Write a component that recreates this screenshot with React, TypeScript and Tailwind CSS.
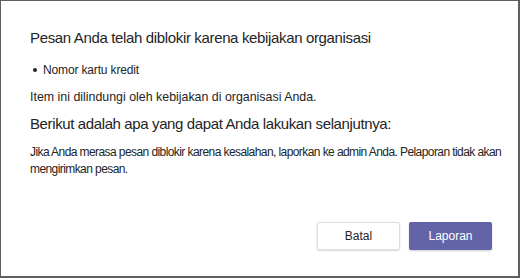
export default function App() {
  return (
    <div className="flex h-[278px] w-[520px] flex-col border border-r-2 border-b-2 border-[#5f5f5f] bg-white pl-[29px] pr-[12px] pt-[27px] font-['Liberation_Sans',Arial,sans-serif] text-[#242424]">
      <h1 className="text-[15px] leading-[20px] tracking-[-0.35px]">
        Pesan Anda telah diblokir karena kebijakan organisasi
      </h1>
      <ul className="mt-[14px] flex flex-col">
        <li className="flex items-center gap-[6px] pl-[3px] text-[12px] leading-[16px] tracking-[-0.15px]">
          <span className="h-[4px] w-[4px] rounded-full bg-[#242424]" />
          <span>Nomor kartu kredit</span>
        </li>
      </ul>
      <p className="mt-[11px] text-[12.4px] leading-[16px]">
        Item ini dilindungi oleh kebijakan di organisasi Anda.
      </p>
      <h2 className="mt-[9px] text-[15px] leading-[20px] tracking-[-0.38px]">
        Berikut adalah apa yang dapat Anda lakukan selanjutnya:
      </h2>
      <p className="mt-[10px] text-[12px] leading-[17px] tracking-[-0.58px]">
        Jika Anda merasa pesan diblokir karena kesalahan, laporkan ke admin Anda. Pelaporan tidak akan mengirimkan pesan.
      </p>
      <div className="mt-auto mb-[26px] flex justify-end gap-[9px] pr-[14px]">
        <button className="h-[28px] w-[83px] rounded-[2px] border border-[#e1dfdd] bg-white text-[12px] text-[#242424] shadow-[0_1px_2px_rgba(0,0,0,0.15)]">
          Batal
        </button>
        <button className="h-[28px] w-[83px] rounded-[2px] bg-[#6264a7] text-[12px] text-white shadow-[0_1px_2px_rgba(0,0,0,0.2)]">
          Laporan
        </button>
      </div>
    </div>
  );
}
